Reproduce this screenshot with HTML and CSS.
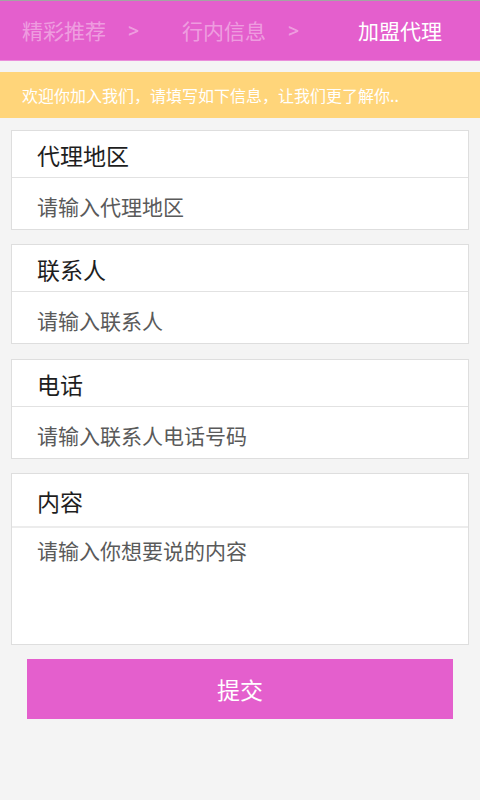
FILE: index.html
```html
<!DOCTYPE html>
<html lang="zh">
<head>
<meta charset="utf-8">
<link rel="stylesheet" href="styles.css">
</head>
<body>
<div class="topline"></div>
<header class="nav">
  <div class="nav-col"><span class="nav-item">精彩推荐</span><span class="nav-arrow">&gt;</span></div>
  <div class="nav-col"><span class="nav-item">行内信息</span><span class="nav-arrow">&gt;</span></div>
  <div class="nav-col current"><span class="nav-item">加盟代理</span></div>
</header>
<div class="banner">欢迎你加入我们，请填写如下信息，让我们更了解你..</div>
<main class="form">
  <section class="card">
    <div class="card-title">代理地区</div>
    <div class="card-input">请输入代理地区</div>
  </section>
  <section class="card">
    <div class="card-title">联系人</div>
    <div class="card-input">请输入联系人</div>
  </section>
  <section class="card">
    <div class="card-title">电话</div>
    <div class="card-input">请输入联系人电话号码</div>
  </section>
  <section class="card card-large">
    <div class="card-title">内容</div>
    <div class="card-input card-textarea">请输入你想要说的内容</div>
  </section>
  <button class="submit">提交</button>
</main>
</body>
</html>
```
FILE: styles.css
```css
* { box-sizing: border-box; }
html, body { margin: 0; padding: 0; }
body {
  width: 480px;
  height: 800px;
  background: #f4f4f4;
  font-family: "Noto Sans CJK SC", "Noto Sans", "Liberation Sans", sans-serif;
  overflow: hidden;
}
.topline { height: 1px; background: #a4a4a4; }
.nav {
  height: 60px;
  background: #e45fcd;
  border-bottom: 1px solid #ea8edb;
  display: grid;
  grid-template-columns: 160px 160px 160px;
}
.nav-col {
  display: flex;
  align-items: center;
  padding: 0 21px 0 22px;
  justify-content: space-between;
  color: rgba(255,255,255,0.4);
}
.nav-col.current { justify-content: center; color: #fff; padding-left: 0; padding-right: 0; }
.nav-item { font-size: 21px; line-height: 1; }
.nav-arrow { font-family: "Roboto", "Liberation Sans", sans-serif; font-size: 22px; line-height: 1; }
.banner {
  margin-top: 11px;
  height: 46px;
  background: #ffd57a;
  color: #fff;
  font-size: 16px;
  line-height: 46px;
  padding-left: 22px;
  white-space: nowrap;
}
.form {
  padding: 12px 11px 0;
  display: flex;
  flex-direction: column;
}
.card {
  background: #fff;
  border: 1px solid #dedede;
  margin-bottom: 14px;
}
.card:nth-child(2) { margin-bottom: 15px; }
.card-title {
  height: 47px;
  border-bottom: 1px solid #e2e2e2;
  padding: 2px 0 0 25px;
  display: flex;
  align-items: center;
  font-size: 23px;
  color: #1e1e1e;
}
.card-input {
  height: 51px;
  padding: 5px 0 0 25px;
  display: flex;
  align-items: center;
  font-size: 21px;
  color: #5a5a5a;
}
.card-large .card-title { height: 54px; border-bottom: 2px solid #ececec; padding-top: 1px; }
.card-textarea { height: 116px; align-items: flex-start; padding-top: 7px; }
.card-large { margin-bottom: 14px; }
.submit {
  margin: 0 16px;
  height: 60px;
  border: none;
  background: #e45fcd;
  color: #fff;
  font-family: inherit;
  font-size: 23px;
  padding: 0;
}
```
